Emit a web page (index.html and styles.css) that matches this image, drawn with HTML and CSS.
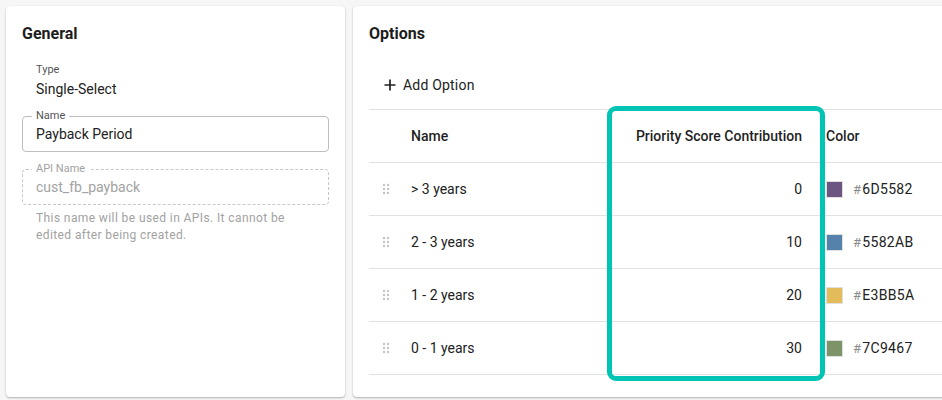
FILE: index.html
```html
<!DOCTYPE html>
<html lang="en">
<head>
<meta charset="utf-8">
<title>Field Options</title>
<link rel="stylesheet" href="styles.css">
</head>
<body>
<div class="layout">
  <section class="card general">
    <h2 class="card-title">General</h2>
    <div class="static-field">
      <div class="static-label">Type</div>
      <div class="static-value">Single-Select</div>
    </div>
    <div class="outlined">
      <span class="float-label">Name</span>
      <span class="field-value">Payback Period</span>
    </div>
    <div class="outlined disabled">
      <span class="float-label">API Name</span>
      <span class="field-value">cust_fb_payback</span>
    </div>
    <p class="helper">This name will be used in APIs. It cannot be edited after being created.</p>
  </section>

  <section class="card options">
    <h2 class="card-title">Options</h2>
    <button class="add-btn" type="button">
      <svg class="plus" width="12" height="12" viewBox="0 0 12 12"><path d="M6 0.5v11M0.5 6h11" stroke="#222" stroke-width="1.7" fill="none"/></svg>
      <span>Add Option</span>
    </button>
    <div class="table">
      <div class="row head">
        <div class="cell"></div>
        <div class="cell">Name</div>
        <div class="cell num">Priority Score Contribution</div>
        <div class="cell colorcell">Color</div>
      </div>
      <div class="row">
        <div class="cell handle"><svg width="8" height="12" viewBox="0 0 8 12"><g fill="#c4c4c4"><circle cx="2" cy="2" r="1.2"/><circle cx="6" cy="2" r="1.2"/><circle cx="2" cy="6" r="1.2"/><circle cx="6" cy="6" r="1.2"/><circle cx="2" cy="10" r="1.2"/><circle cx="6" cy="10" r="1.2"/></g></svg></div>
        <div class="cell">&gt; 3 years</div>
        <div class="cell num">0</div>
        <div class="cell colorcell"><span class="swatch" style="background:#6D5582"></span><span class="hash">#</span>6D5582</div>
      </div>
      <div class="row">
        <div class="cell handle"><svg width="8" height="12" viewBox="0 0 8 12"><g fill="#c4c4c4"><circle cx="2" cy="2" r="1.2"/><circle cx="6" cy="2" r="1.2"/><circle cx="2" cy="6" r="1.2"/><circle cx="6" cy="6" r="1.2"/><circle cx="2" cy="10" r="1.2"/><circle cx="6" cy="10" r="1.2"/></g></svg></div>
        <div class="cell">2 - 3 years</div>
        <div class="cell num">10</div>
        <div class="cell colorcell"><span class="swatch" style="background:#5582AB"></span><span class="hash">#</span>5582AB</div>
      </div>
      <div class="row">
        <div class="cell handle"><svg width="8" height="12" viewBox="0 0 8 12"><g fill="#c4c4c4"><circle cx="2" cy="2" r="1.2"/><circle cx="6" cy="2" r="1.2"/><circle cx="2" cy="6" r="1.2"/><circle cx="6" cy="6" r="1.2"/><circle cx="2" cy="10" r="1.2"/><circle cx="6" cy="10" r="1.2"/></g></svg></div>
        <div class="cell">1 - 2 years</div>
        <div class="cell num">20</div>
        <div class="cell colorcell"><span class="swatch" style="background:#E3BB5A"></span><span class="hash">#</span>E3BB5A</div>
      </div>
      <div class="row">
        <div class="cell handle"><svg width="8" height="12" viewBox="0 0 8 12"><g fill="#c4c4c4"><circle cx="2" cy="2" r="1.2"/><circle cx="6" cy="2" r="1.2"/><circle cx="2" cy="6" r="1.2"/><circle cx="6" cy="6" r="1.2"/><circle cx="2" cy="10" r="1.2"/><circle cx="6" cy="10" r="1.2"/></g></svg></div>
        <div class="cell">0 - 1 years</div>
        <div class="cell num">30</div>
        <div class="cell colorcell"><span class="swatch" style="background:#7C9467"></span><span class="hash">#</span>7C9467</div>
      </div>
      <div class="highlight"></div>
    </div>
  </section>
</div>
</body>
</html>
```

FILE: styles.css
```css
* { box-sizing: border-box; }
html, body { margin: 0; height: 100%; }
body {
  background: #f6f6f6;
  font-family: Roboto, "Liberation Sans", sans-serif;
  color: #212121;
  overflow: hidden;
}
.layout {
  display: flex;
  gap: 8px;
  padding: 6px;
  width: 1100px;
  height: 400px;
}
.card {
  background: #fff;
  border-radius: 4px;
  box-shadow: 0 1px 2px rgba(0,0,0,0.28), 0 0 1px rgba(0,0,0,0.08);
  height: 391px;
  padding: 18px 16px 16px;
}
.general { width: 339px; flex: none; }
.options { width: 660px; flex: none; }
.card-title {
  margin: 0;
  font-size: 16px;
  line-height: 20px;
  font-weight: 700;
  color: #1d1d1d;
}
.static-field { margin: 19px 0 0 14px; }
.static-label { font-size: 11px; line-height: 14px; color: #555; }
.static-value { font-size: 14px; line-height: 20px; margin-top: 2px; color: #222; }

.outlined {
  position: relative;
  height: 36px;
  border: 1px solid #bdbdbd;
  border-radius: 4px;
  margin-top: 17px;
  padding: 0 13px;
  display: flex;
  align-items: center;
}
.outlined.disabled { border: 1px dashed #c8c8c8; }
.float-label {
  position: absolute;
  left: 9px;
  top: -8px;
  padding: 0 4px;
  background: #fff;
  font-size: 11px;
  line-height: 14px;
  color: #555;
}
.field-value { font-size: 14px; color: #222; }
.disabled .float-label, .disabled .field-value { color: #a2a2a2; }
.helper {
  margin: 5px 0 0 14px;
  font-size: 12px;
  line-height: 17px;
  letter-spacing: 0.4px;
  color: #a2a2a2;
  width: 270px;
}

.add-btn {
  margin-top: 31px;
  margin-left: 15px;
  padding: 0;
  border: 0;
  background: none;
  display: flex;
  align-items: center;
  gap: 7px;
  font-family: inherit;
  font-size: 14px;
  letter-spacing: 0.2px;
  color: #222;
  height: 20px;
}
.table {
  position: relative;
  margin-top: 14px;
  border-top: 1px solid #e2e2e2;
}
.row {
  display: grid;
  grid-template-columns: 42px 201px 206px 1fr;
  height: 53px;
  border-bottom: 1px solid #e2e2e2;
  align-items: center;
  font-size: 14px;
}
.row.head { font-size: 14px; font-weight: 500; color: #1f1f1f; }
.cell { white-space: nowrap; }
.num { text-align: right; padding-right: 16px; }
.colorcell { padding-left: 8px; display: flex; align-items: center; }
.handle { padding-left: 13px; display: flex; align-items: center; }
.swatch {
  width: 17px;
  height: 17px;
  border: 1px solid #e0e0e0;
  margin-right: 10px;
}
.hash { color: #8a8a8a; font-size: 13px; margin-right: 1px; }
.colorcell:not(.head .colorcell) { letter-spacing: 0.3px; }
.highlight {
  position: absolute;
  left: 238px;
  top: -4px;
  width: 218px;
  height: 275px;
  border: 5px solid #00c4b4;
  border-radius: 9px;
  pointer-events: none;
}
```
